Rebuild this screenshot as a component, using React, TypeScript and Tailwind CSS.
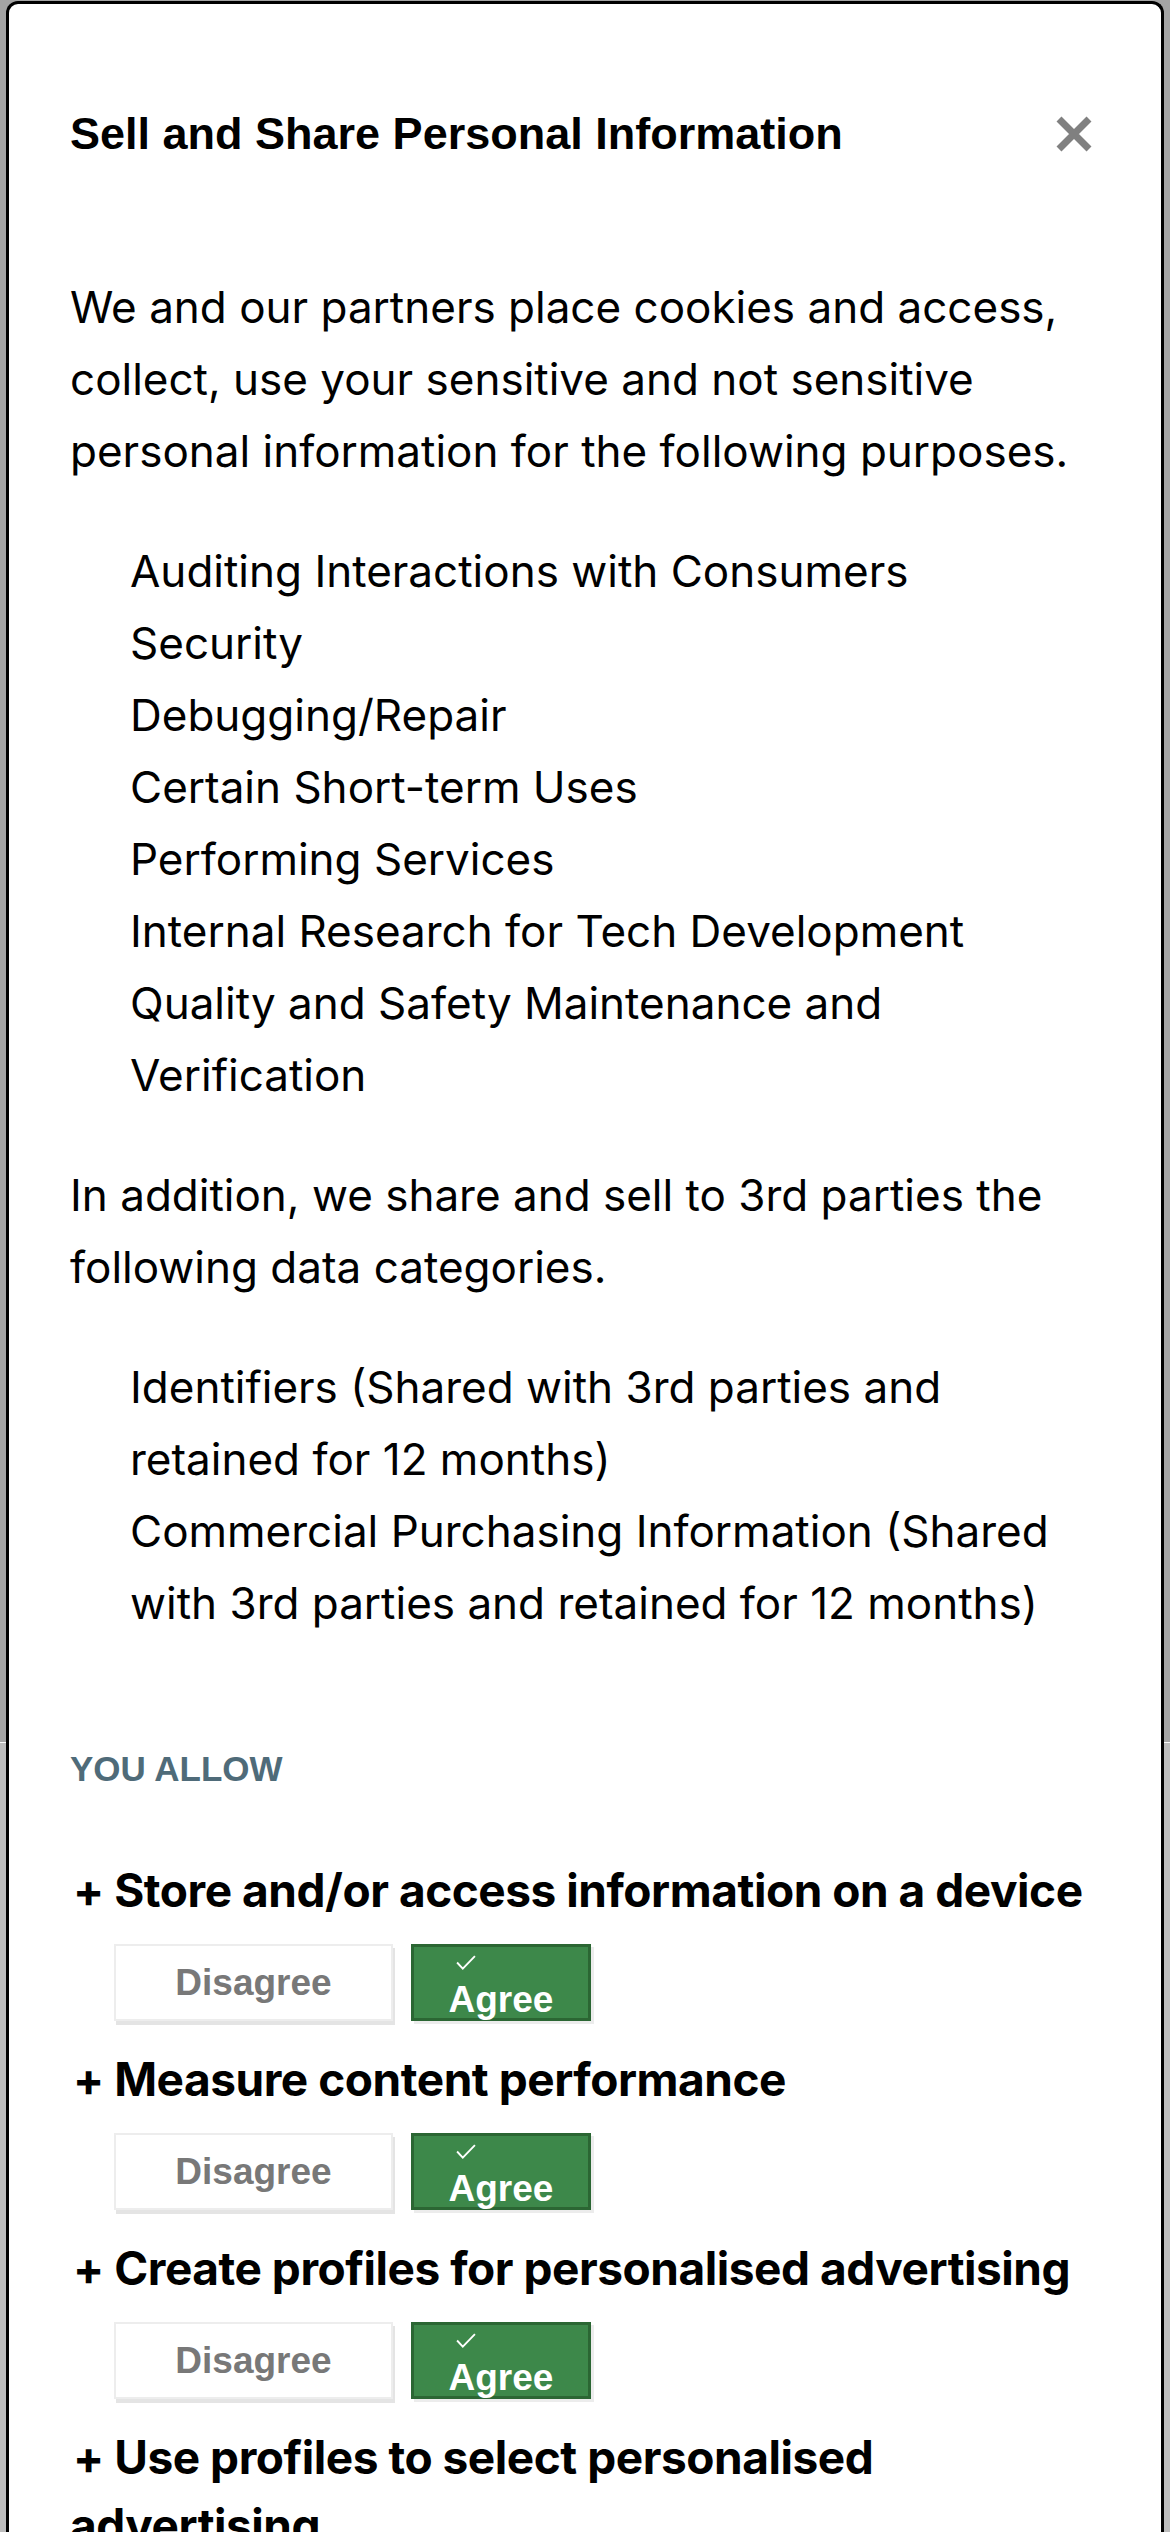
const purposes = [
  "Auditing Interactions with Consumers",
  "Security",
  "Debugging/Repair",
  "Certain Short-term Uses",
  "Performing Services",
  "Internal Research for Tech Development",
  "Quality and Safety Maintenance and Verification",
];

const categories = [
  "Identifiers (Shared with 3rd parties and retained for 12 months)",
  "Commercial Purchasing Information (Shared with 3rd parties and retained for 12 months)",
];

const choices = [
  "Store and/or access information on a device",
  "Measure content performance",
  "Create profiles for personalised advertising",
  "Use profiles to select personalised advertising",
  "Select personalised content",
];

const body = "font-['Inter','Noto_Sans',sans-serif]";
const arial = "font-['Liberation_Sans',Arial,sans-serif]";

function CloseIcon() {
  return (
    <svg width="38" height="38" viewBox="0 0 38 38" aria-hidden="true">
      <path d="M4 4 L34 34 M34 4 L4 34" stroke="#808080" strokeWidth="7" />
    </svg>
  );
}

function ConsentChoice({ label }: { label: string }) {
  return (
    <div className="pb-[24px]">
      <h3 className={`${body} text-[46px] font-bold leading-[68px] tracking-[-0.01em] text-black`}>
        <span className="ml-[3px]">+</span> {label}
      </h3>
      <div className={`${arial} mt-[20px] ml-[44px] flex gap-[18px]`}>
        <button className="flex h-[77px] w-[279px] items-center justify-center border-2 border-[#ededed] bg-white text-[37px] font-bold text-[#787878] shadow-[2px_4px_0_#e4e4e4]">
          Disagree
        </button>
        <button className="flex h-[77px] w-[180px] flex-col items-center border-[3px] border-[#2b6633] bg-[#3d884a] pt-[8px] text-[37px] font-bold leading-[37px] text-white shadow-[3px_3px_0_#ececec]">
          <svg width="28" height="21" viewBox="0 0 28 21" className="-ml-[70px]" aria-hidden="true">
            <path d="M1.5 10.5 L9.5 19 L26.5 1.5" fill="none" stroke="white" strokeWidth="2.6" />
          </svg>
          <span className="mt-[11px]">Agree</span>
        </button>
      </div>
    </div>
  );
}

export default function App() {
  return (
    <div className="h-[2532px] overflow-hidden bg-[linear-gradient(to_bottom,#a4a4a4_1742px,#fafafa_1742px,#fafafa_1743px,#bcbcbc_1743px)] px-[6px] pt-px">
      <div className="rounded-t-[12px] border-[3px] border-b-0 border-black bg-white px-[61px] pt-[104px] pb-40">
        <div className="flex items-center justify-between">
          <h2 className={`${arial} text-[45px] font-bold leading-[52px] text-black`}>
            Sell and Share Personal Information
          </h2>
          <button className="mr-[7px]" aria-label="Close">
            <CloseIcon />
          </button>
        </div>

        <div className={`${body} text-[44px] leading-[72px] text-black`}>
          <p className="mt-[111px]">
            We and our partners place cookies and access, collect, use your sensitive and not
            sensitive personal information for the following purposes.
          </p>
          <ul className="mt-[48px] pl-[60px]">
            {purposes.map((p) => (
              <li key={p}>{p}</li>
            ))}
          </ul>
          <p className="mt-[48px]">
            In addition, we share and sell to 3rd parties the following data categories.
          </p>
          <ul className="mt-[48px] pl-[60px]">
            {categories.map((c) => (
              <li key={c}>{c}</li>
            ))}
          </ul>
        </div>

        <p className={`${arial} mt-[110px] text-[35px] font-bold leading-[40px] text-[#4f6b79]`}>
          YOU ALLOW
        </p>

        <div className="mt-[67px]">
          {choices.map((c) => (
            <ConsentChoice key={c} label={c} />
          ))}
        </div>
      </div>
    </div>
  );
}
